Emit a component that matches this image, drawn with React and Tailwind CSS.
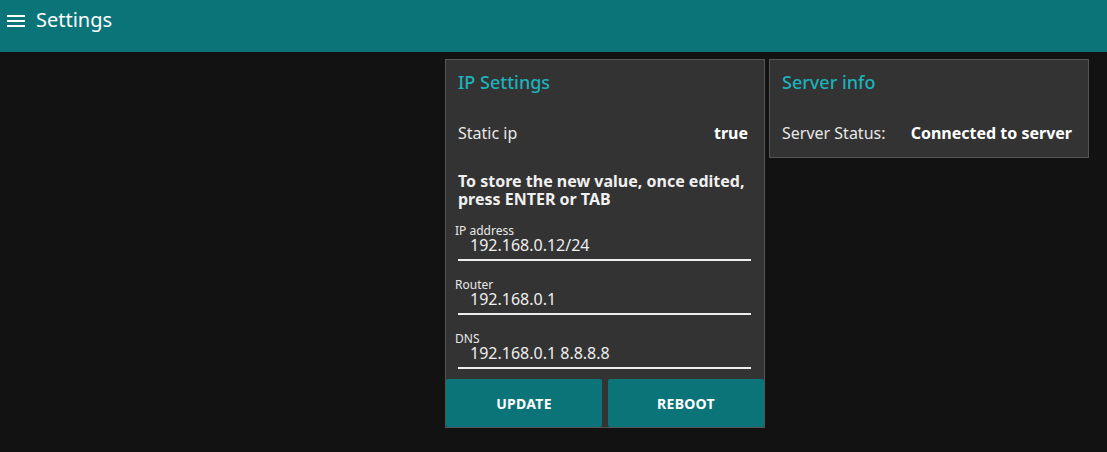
const font = { fontFamily: '"Noto Sans", "Open Sans", sans-serif' };

function Field({ label, value }) {
  return (
    <div className="mt-[18px] first:mt-0">
      <div className="text-[12px] leading-[12px] text-[#e8e8e8] -ml-[3px]">{label}</div>
      <div className="h-[16px] pl-[12px] text-[16px] leading-[16px] text-[#eeeeee]">{value}</div>
      <div className="h-[2px] bg-[#eeeeee] mt-[6px]" />
    </div>
  );
}

export default function App() {
  return (
    <div className="min-h-[452px] bg-[#121212] text-white" style={font}>
      <header className="h-[52px] bg-[#0a7478] flex items-start pt-[8px] pl-[7px] gap-[11px]">
        <svg width="18" height="14" viewBox="0 0 18 14" className="mt-[6px]">
          <rect x="0" y="1" width="18" height="2" fill="white" />
          <rect x="0" y="6" width="18" height="2" fill="white" />
          <rect x="0" y="11" width="18" height="2" fill="white" />
        </svg>
        <h1 className="text-[20px] leading-[24px]">Settings</h1>
      </header>

      <div className="flex justify-end items-start gap-[4px] pt-[7px] pr-[18px]">
        {/* IP settings card */}
        <div className="w-[320px] bg-[#333333] border border-[#555555]">
          <div className="px-[12px] pt-[10px]">
            <h2 className="text-[18px] leading-[24px] text-[#1cb2ba] font-medium">IP Settings</h2>
            <div className="flex justify-between items-center mt-[29px] text-[16px] leading-[20px]">
              <span className="text-[#e8e8e8]">Static ip</span>
              <span className="font-bold pr-[4px]">true</span>
            </div>
            <p className="mt-[29px] text-[16px] leading-[18px] font-bold text-[#f0f0f0]">
              To store the new value, once edited, press ENTER or TAB
            </p>
            <div className="mt-[17px] pr-[1px] pb-[10px]">
              <Field label="IP address" value="192.168.0.12/24" />
              <Field label="Router" value="192.168.0.1" />
              <Field label="DNS" value="192.168.0.1 8.8.8.8" />
            </div>
          </div>
          <div className="flex justify-between">
            <button className="w-[156px] h-[48px] bg-[#0a7478] rounded-[2px] text-[14px] font-bold uppercase tracking-[0.3px]">
              Update
            </button>
            <button className="w-[156px] h-[48px] bg-[#0a7478] rounded-[2px] text-[14px] font-bold uppercase tracking-[0.3px]">
              Reboot
            </button>
          </div>
        </div>

        {/* Server info card */}
        <div className="w-[320px] bg-[#333333] border border-[#555555] px-[12px] pt-[10px] pb-[14px]">
          <h2 className="text-[18px] leading-[24px] text-[#1cb2ba] font-medium">Server info</h2>
          <div className="flex items-center justify-between mt-[29px] text-[16px] leading-[20px] pr-[4px]">
            <span className="text-[#e8e8e8]">Server Status:</span>
            <span className="font-bold">Connected to server</span>
          </div>
        </div>
      </div>
    </div>
  );
}
